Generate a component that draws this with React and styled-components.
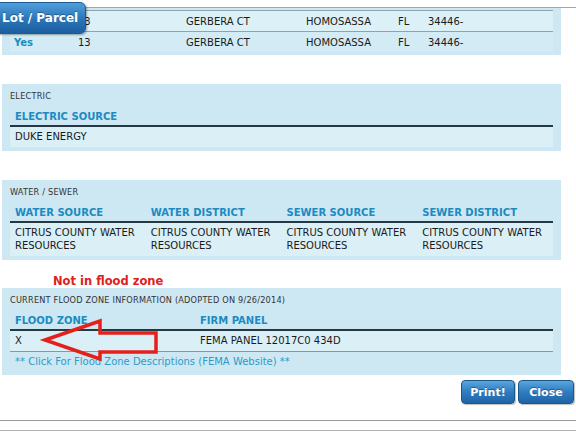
import React from "react";
import styled, { createGlobalStyle } from "styled-components";

const Global = createGlobalStyle`
  html, body { margin: 0; padding: 0; background: #ffffff; }
  body { font-family: "DejaVu Sans", Verdana, sans-serif; font-size: 10px; color: #1a1a1a; }
`;

const Page = styled.div`
  position: relative;
  width: 576px;
  height: 432px;
  overflow: hidden;
  padding-top: 7px;
  box-sizing: border-box;
`;

const Rule = styled.div`
  height: 0;
  border-top: 1px solid ${(p) => p.$color || "#a3a3a3"};
  margin-top: ${(p) => p.$mt || 0}px;
`;

const Panel = styled.section`
  position: relative;
  margin: ${(p) => p.$mt || 0}px 15px 0 2px;
  background: #cde8f3;
  padding: ${(p) => (p.$plain ? "2px 8px 3px" : "7px 8px 4px")};
`;

const Caption = styled.div`
  font-size: 8.2px;
  line-height: 10px;
  color: #333;
  letter-spacing: 0.2px;
`;

const Grid = styled.div`
  display: grid;
  grid-template-columns: ${(p) => p.$cols};
`;

const HeadCell = styled.div`
  font-weight: bold;
  color: #1b8bc2;
  font-size: 10px;
  line-height: 14px;
  padding: 9px 5px 1px;
  border-bottom: 2px solid #263843;
  white-space: nowrap;
`;

const Cell = styled.div`
  background: #dbeff7;
  line-height: 13px;
  padding: 3px 5px 4px;
  border-bottom: ${(p) => (p.$ruled ? "1px solid #7f9aa6" : "none")};
`;

const AddrRow = styled.div`
  display: grid;
  grid-template-columns: 64px 108px 120px 92px 30px 1fr;
  height: 20px;
  align-items: center;
  background: ${(p) => (p.$light ? "#dcf0f7" : "#d3ebf4")};
  border-top: ${(p) => (p.$light ? "1px solid #8ea3ad" : "none")};
  border-bottom: ${(p) => (p.$light ? "1px solid #8ea3ad" : "none")};
`;

const AddrCell = styled.div`
  padding-left: 4px;
  line-height: 13px;
  white-space: nowrap;
  font-weight: ${(p) => (p.$bold ? "bold" : "normal")};
  color: ${(p) => (p.$bold ? "#1b8bc2" : "#1a1a1a")};
`;

const Tab = styled.div`
  position: absolute;
  left: -8px;
  top: 2px;
  width: 94px;
  height: 32px;
  box-sizing: border-box;
  padding-left: 9px;
  border-radius: 6px;
  background: linear-gradient(#4f9fdb, #2a74b9 55%, #1c5f9f);
  border: 1px solid #1d5a92;
  box-shadow: 1px 1px 2px rgba(0, 0, 0, 0.35);
  color: #fff;
  font-weight: bold;
  font-size: 12px;
  line-height: 30px;
  text-shadow: 0 -1px 0 rgba(0, 0, 0, 0.3);
  white-space: nowrap;
`;

const Notice = styled.div`
  margin: 14px 0 0 53px;
  color: #e0201c;
  font-weight: bold;
  font-size: 11.5px;
  line-height: 14px;
`;

const LinkRow = styled.div`
  color: #2c9bca;
  line-height: 13px;
  padding: 3px 5px 3px;
`;

const Arrow = styled.svg`
  position: absolute;
  left: 38px;
  top: 28px;
  overflow: visible;
`;

const ButtonBar = styled.div`
  display: flex;
  justify-content: flex-end;
  gap: 3px;
  margin: 5px 2px 0 0;
`;

const Button = styled.button`
  width: ${(p) => p.$w}px;
  height: 24px;
  padding: 0;
  border: 1px solid #1b5688;
  border-radius: 4px;
  background: linear-gradient(#58a5de, #2f7cc0 50%, #1e64a6);
  color: #fff;
  font-family: "DejaVu Sans", Verdana, sans-serif;
  font-weight: bold;
  font-size: 11px;
  text-shadow: 0 -1px 0 rgba(0, 0, 0, 0.35);
  box-shadow: 1px 1px 1px rgba(0, 0, 0, 0.25);
`;

const addr = ["13", "GERBERA CT", "HOMOSASSA", "FL", "34446-"];

export default function App() {
  return (
    <>
      <Global />
      <Page>
        <Rule />
        <Panel $plain>
          <AddrRow $light>
            <AddrCell $bold></AddrCell>
            {addr.map((t, i) => (
              <AddrCell key={i}>{t}</AddrCell>
            ))}
          </AddrRow>
          <AddrRow>
            <AddrCell $bold>Yes</AddrCell>
            {addr.map((t, i) => (
              <AddrCell key={i}>{t}</AddrCell>
            ))}
          </AddrRow>
        </Panel>

        <Panel $mt={29}>
          <Caption>ELECTRIC</Caption>
          <Grid $cols="1fr">
            <HeadCell>ELECTRIC SOURCE</HeadCell>
            <Cell>DUKE ENERGY</Cell>
          </Grid>
        </Panel>

        <Panel $mt={29}>
          <Caption>WATER / SEWER</Caption>
          <Grid $cols="repeat(4, 1fr)">
            <HeadCell>WATER SOURCE</HeadCell>
            <HeadCell>WATER DISTRICT</HeadCell>
            <HeadCell>SEWER SOURCE</HeadCell>
            <HeadCell>SEWER DISTRICT</HeadCell>
            <Cell>CITRUS COUNTY WATER RESOURCES</Cell>
            <Cell>CITRUS COUNTY WATER RESOURCES</Cell>
            <Cell>CITRUS COUNTY WATER RESOURCES</Cell>
            <Cell>CITRUS COUNTY WATER RESOURCES</Cell>
          </Grid>
        </Panel>

        <Notice>Not in flood zone</Notice>

        <Panel>
          <Caption>CURRENT FLOOD ZONE INFORMATION (ADOPTED ON 9/26/2014)</Caption>
          <Grid $cols="185px 1fr">
            <HeadCell>FLOOD ZONE</HeadCell>
            <HeadCell>FIRM PANEL</HeadCell>
            <Cell $ruled>X</Cell>
            <Cell $ruled>FEMA PANEL 12017C0 434D</Cell>
          </Grid>
          <LinkRow>** Click For Flood Zone Descriptions (FEMA Website) **</LinkRow>
          <Arrow width="122" height="48" viewBox="0 0 122 48">
            <polygon
              points="5,24 60,5 60,17 116,17 116,36 60,36 60,43"
              fill="none"
              stroke="#e5201b"
              strokeWidth="3.5"
              strokeLinejoin="miter"
            />
          </Arrow>
        </Panel>

        <ButtonBar>
          <Button $w={54}>Print!</Button>
          <Button $w={56}>Close</Button>
        </ButtonBar>

        <Rule $mt={16} $color="#9a9a9a" />
        <Rule $mt={9} $color="#b0b0b0" />

        <Tab>Lot / Parcel</Tab>
      </Page>
    </>
  );
}
